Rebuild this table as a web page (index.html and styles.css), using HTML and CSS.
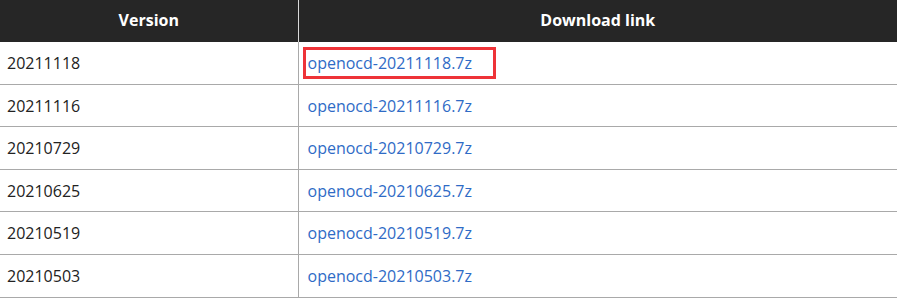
FILE: index.html
```html
<!DOCTYPE html>
<html>
<head>
<meta charset="utf-8">
<link rel="stylesheet" href="styles.css">
</head>
<body>
<table class="dl-table">
  <thead>
    <tr><th class="col-ver">Version</th><th class="col-link">Download link</th></tr>
  </thead>
  <tbody>
    <tr><td class="col-ver">20211118</td><td class="col-link"><a class="dl highlight" href="#">openocd-20211118.7z</a></td></tr>
    <tr><td class="col-ver">20211116</td><td class="col-link"><a class="dl" href="#">openocd-20211116.7z</a></td></tr>
    <tr><td class="col-ver">20210729</td><td class="col-link"><a class="dl" href="#">openocd-20210729.7z</a></td></tr>
    <tr><td class="col-ver">20210625</td><td class="col-link"><a class="dl" href="#">openocd-20210625.7z</a></td></tr>
    <tr><td class="col-ver">20210519</td><td class="col-link"><a class="dl" href="#">openocd-20210519.7z</a></td></tr>
    <tr><td class="col-ver">20210503</td><td class="col-link"><a class="dl" href="#">openocd-20210503.7z</a></td></tr>
  </tbody>
</table>
</body>
</html>
```
FILE: styles.css
```css
html, body {
  margin: 0;
  padding: 0;
  background: #fff;
}
body {
  font-family: "Open Sans", "Noto Sans", sans-serif;
  font-size: 16px;
  color: #222;
}
.dl-table {
  width: 897px;
  border-collapse: collapse;
  table-layout: fixed;
}
.dl-table th {
  background: #262626;
  color: #fff;
  font-weight: 700;
  text-align: center;
  height: 42px;
  padding: 0 8px;
  line-height: 25.6px;
  box-sizing: border-box;
}
.dl-table th.col-ver {
  width: 298px;
  border-right: 1px solid #d8d8d8;
}
.dl-table td {
  padding: 9px 8px 7px;
  line-height: 25.6px;
  border-bottom: 1px solid #a9a9a9;
  text-align: left;
  vertical-align: middle;
}
.dl-table td.col-ver {
  border-right: 1px solid #a9a9a9;
  padding-left: 7px;
}
.dl-table td.col-link {
  padding-left: 9px;
}
.dl {
  color: #2f6bc6;
  text-decoration: none;
}
.highlight {
  position: relative;
}
.highlight::after {
  content: "";
  position: absolute;
  left: -5px;
  right: -24px;
  top: -5px;
  bottom: -5px;
  border: 3px solid #ee3338;
}
```
